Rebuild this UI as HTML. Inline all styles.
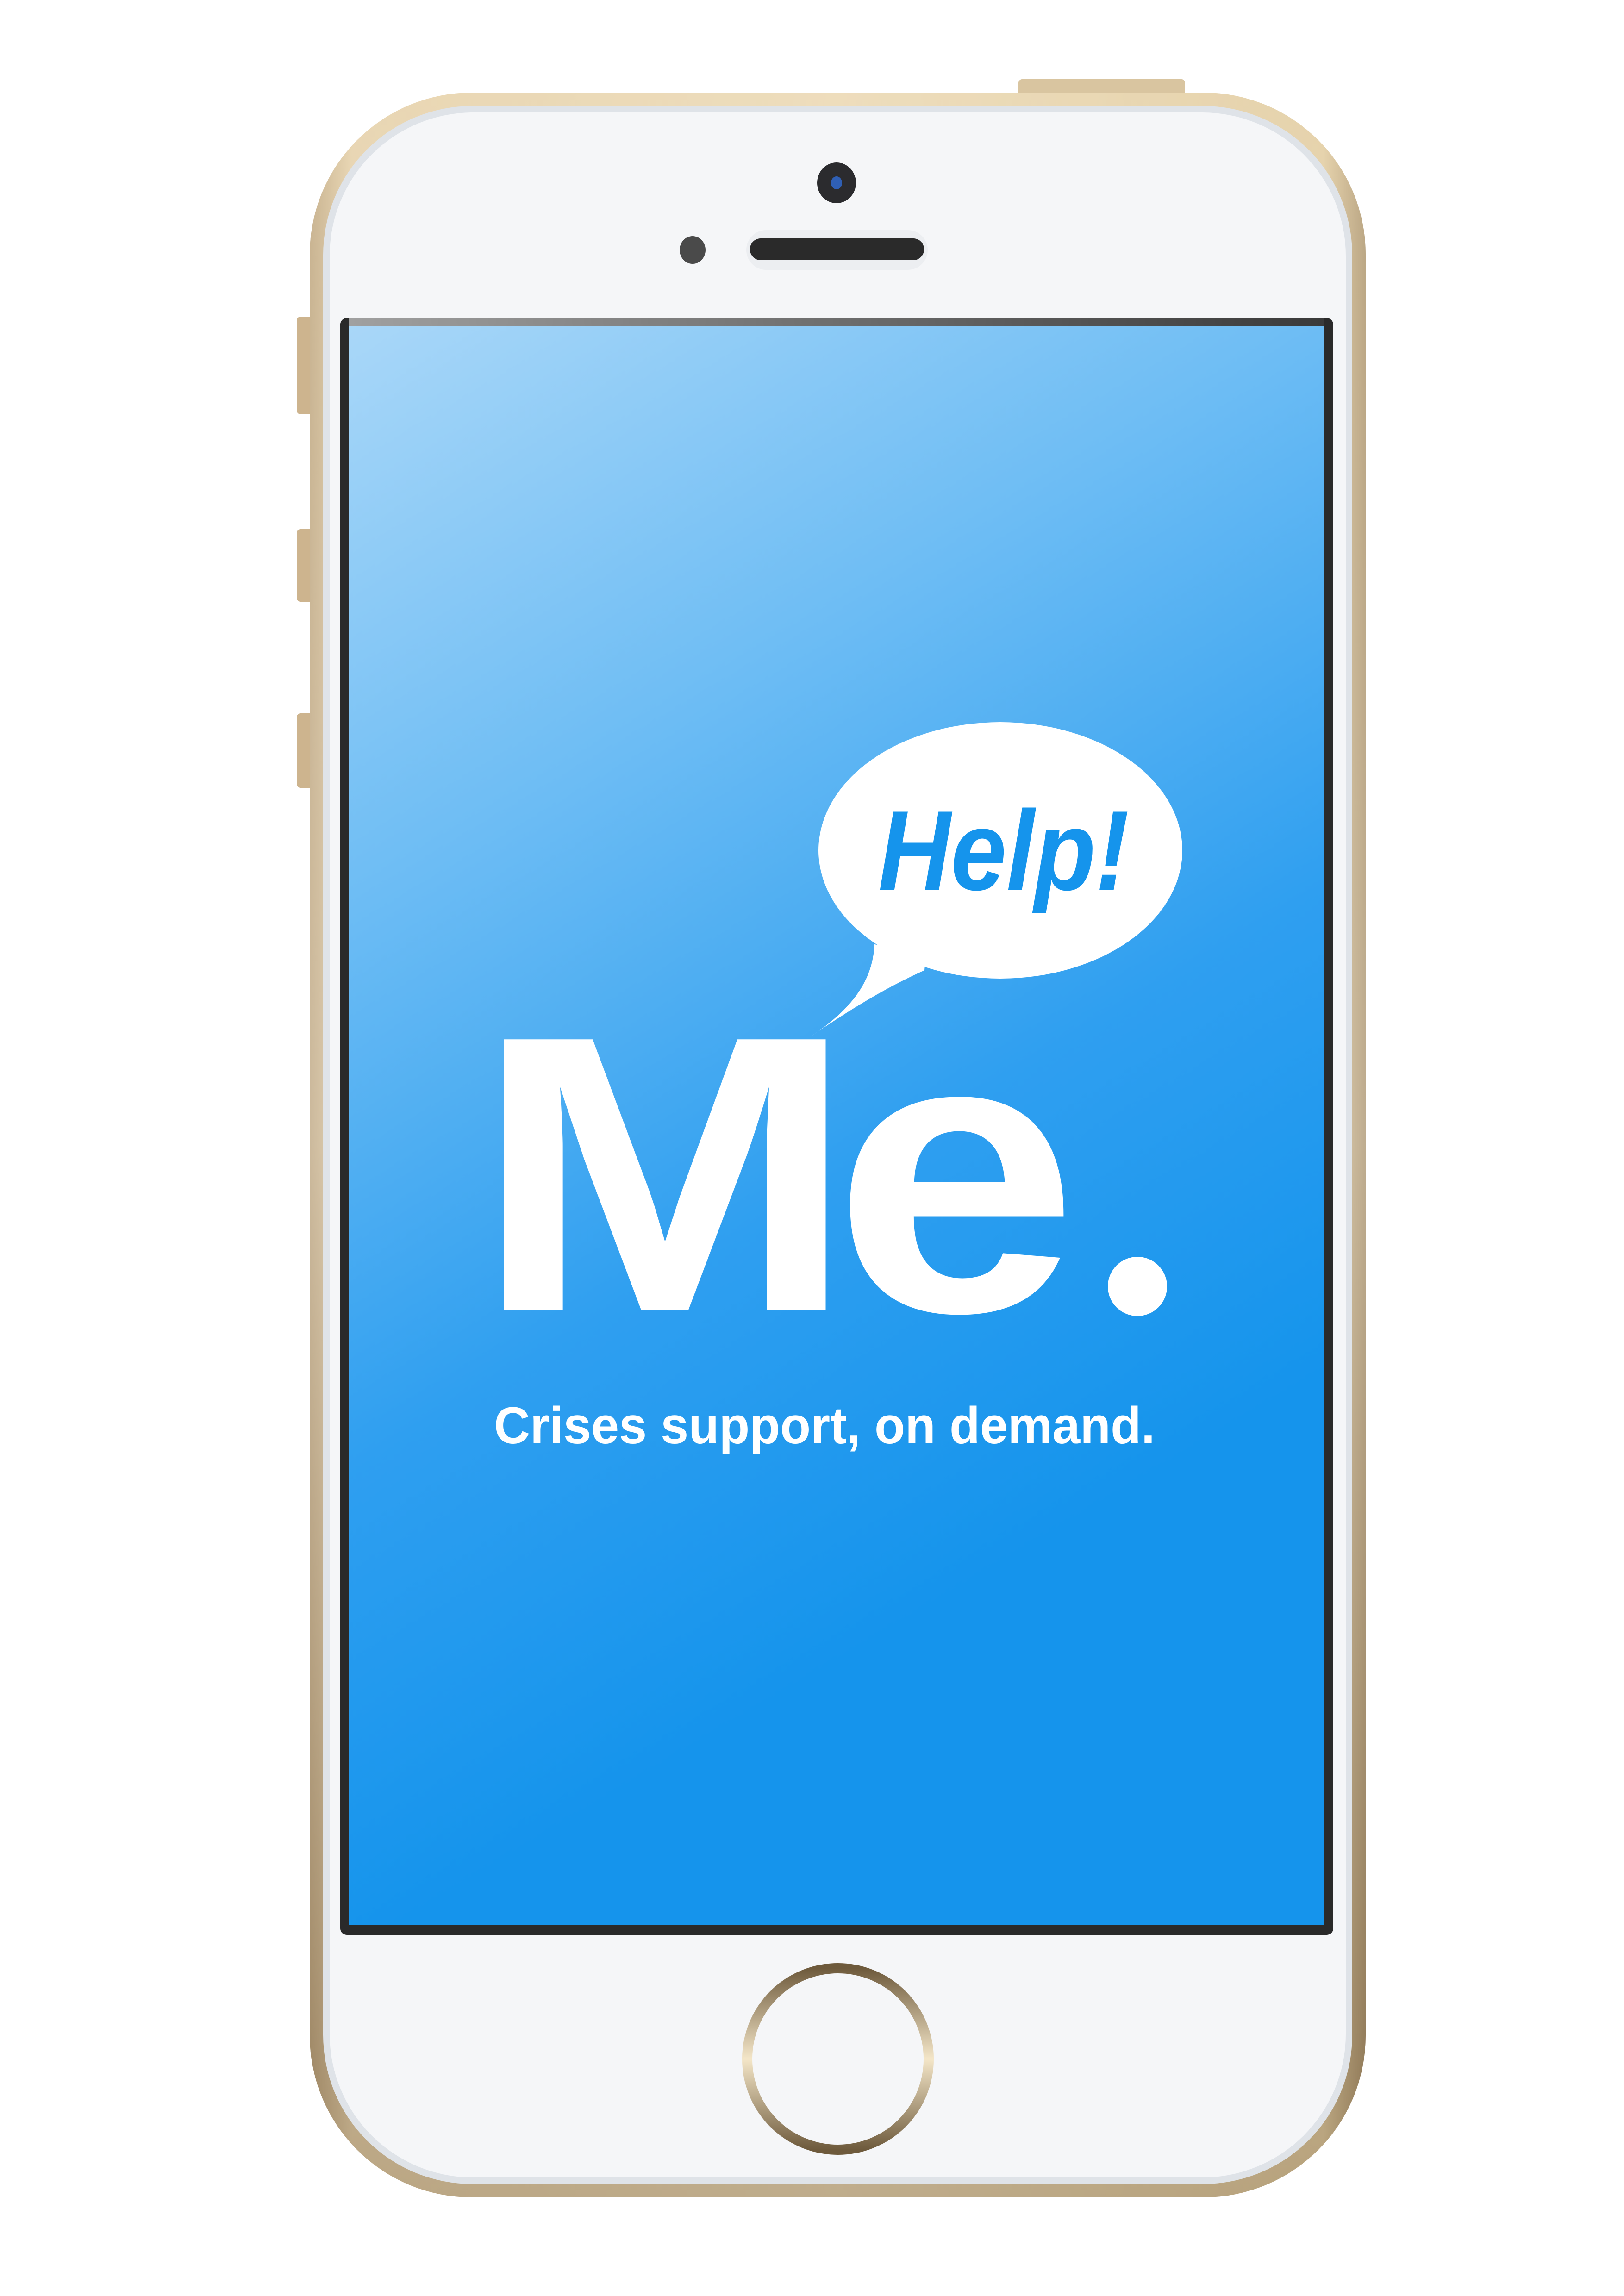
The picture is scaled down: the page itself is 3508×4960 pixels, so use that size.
<!DOCTYPE html>
<html><head><meta charset="utf-8">
<style>
html,body{margin:0;padding:0;background:#fff;}
svg{display:block;}
</style></head>
<body>
<svg width="3508" height="4960" viewBox="0 0 3508 4960" xmlns="http://www.w3.org/2000/svg">
<defs>
<linearGradient id="gold" x1="0" y1="0" x2="1" y2="0">
<stop offset="0" stop-color="#a89070"/><stop offset="0.04" stop-color="#e8d6b6"/>
<stop offset="0.5" stop-color="#f2e4c8"/><stop offset="0.96" stop-color="#e2cfa8"/><stop offset="1" stop-color="#8d7656"/>
</linearGradient>
<linearGradient id="goldv" x1="0" y1="0" x2="0" y2="1">
<stop offset="0" stop-color="#e9d6b0"/><stop offset="0.5" stop-color="#efe2c8"/><stop offset="1" stop-color="#8c7550"/>
</linearGradient>
<linearGradient id="blue" gradientUnits="userSpaceOnUse" x1="753" y1="705" x2="2300" y2="3300">
<stop offset="0" stop-color="#a9d7f8"/><stop offset="0.35" stop-color="#6ebdf4"/>
<stop offset="0.7" stop-color="#2f9ff0"/><stop offset="1" stop-color="#1594ec"/>
</linearGradient>
<linearGradient id="bezel" x1="0" y1="0" x2="1" y2="0">
<stop offset="0" stop-color="#a0a0a0"/><stop offset="1" stop-color="#3a3a3a"/>
</linearGradient>
<linearGradient id="ring" x1="0" y1="0" x2="0" y2="1">
<stop offset="0" stop-color="#6e5a3c"/><stop offset="0.5" stop-color="#f4e6c8"/><stop offset="1" stop-color="#6e5a3c"/>
</linearGradient>
</defs>
<!-- side buttons -->
<rect x="641" y="684" width="40" height="211" rx="8" fill="#cdb48e"/>
<rect x="641" y="1143" width="40" height="157" rx="8" fill="#cdb48e"/>
<rect x="641" y="1541" width="40" height="161" rx="8" fill="#cdb48e"/>
<rect x="2200" y="171" width="360" height="50" rx="8" fill="#d9c5a0"/>
<!-- body -->
<rect x="669" y="200" width="2281" height="4547" rx="350" fill="url(#gold)"/>
<rect x="669" y="200" width="2281" height="4547" rx="350" fill="url(#goldv)" opacity="0.5"/>
<rect x="698" y="229" width="2223" height="4489" rx="322" fill="#dfe3e8"/>
<rect x="712" y="243" width="2195" height="4461" rx="310" fill="#f5f6f8"/>
<!-- camera, sensor, speaker -->
<ellipse cx="1807" cy="395" rx="42" ry="44" fill="#2b2b2e"/>
<ellipse cx="1807" cy="395" rx="12" ry="14" fill="#2f5fb4"/>
<ellipse cx="1496" cy="540" rx="28" ry="30" fill="#4a4a4a"/>
<rect x="1612" y="497" width="392" height="86" rx="43" fill="#eceef1"/>
<rect x="1620" y="515" width="376" height="47" rx="23" fill="#2a2a2a"/>
<!-- screen -->
<rect x="735" y="687" width="2145" height="3493" rx="14" fill="#2a2a2a"/>
<rect x="753" y="687" width="2106" height="18" fill="url(#bezel)"/>
<rect x="753" y="705" width="2106" height="3453" fill="url(#blue)"/>
<!-- bubble -->
<ellipse cx="2161" cy="1837" rx="393" ry="277" fill="#fff"/>
<path d="M1889 2040 C1885 2120 1840 2180 1750 2240 C1830 2185 1910 2135 1997 2096 L2000 2060 Z" fill="#fff"/>
<text x="1897" y="1922" font-family="Liberation Sans, sans-serif" font-weight="bold" font-style="italic" font-size="245" fill="#1594ec" textLength="542" lengthAdjust="spacingAndGlyphs">Help!</text>
<!-- Me. -->
<text x="1022" y="2830" font-family="Liberation Sans, sans-serif" font-weight="bold" font-size="850" fill="#fff" textLength="828" lengthAdjust="spacingAndGlyphs">M</text>
<text x="1799" y="2832" font-family="Liberation Sans, sans-serif" font-weight="bold" font-size="860" fill="#fff" textLength="531" lengthAdjust="spacingAndGlyphs">e</text>
<text x="2418" y="2815" font-family="Liberation Sans, sans-serif" font-weight="bold" font-size="380" fill="#fff">.</text>
<circle cx="2457" cy="2779" r="64" fill="#fff"/>
<text x="1067" y="3118" font-family="Liberation Sans, sans-serif" font-weight="bold" font-size="112" fill="#fff" textLength="1428" lengthAdjust="spacingAndGlyphs">Crises support, on demand.</text>
<!-- home button -->
<circle cx="1810" cy="4448" r="196" fill="none" stroke="url(#ring)" stroke-width="22"/>
</svg>
</body></html>
